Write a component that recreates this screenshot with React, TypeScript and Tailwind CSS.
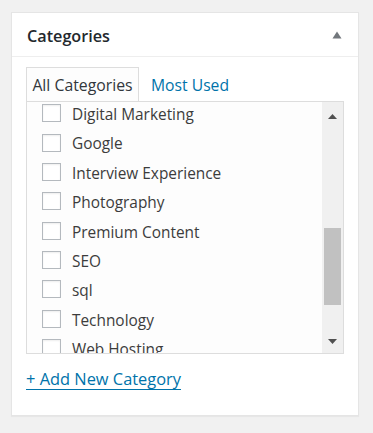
import React from "react";

const items = [
  "Digital Marketing",
  "Google",
  "Interview Experience",
  "Photography",
  "Premium Content",
  "SEO",
  "sql",
  "Technology",
  "Web Hosting",
];

export default function App() {
  return (
    <div
      className="w-[373px] h-[433px] bg-[#f1f1f1] pt-[12px] pl-[11px]"
      style={{ fontFamily: '"Open Sans", "Noto Sans", sans-serif' }}
    >
      <div className="w-[348px] h-[404px] bg-white border border-[#e5e5e5] shadow-[0_1px_1px_rgba(0,0,0,0.04)] flex flex-col">
        <div className="h-[44px] border-b border-[#eeeeee] flex items-center justify-between pl-[15px] pr-[16px]">
          <span className="text-[16.2px] font-semibold text-[#23282d] leading-none pt-[3px]">Categories</span>
          <svg width="10" height="8" viewBox="0 0 10 8">
            <polygon points="5,0.5 9.5,7.5 0.5,7.5" fill="#72777c" />
          </svg>
        </div>
        <div className="pl-[14px] pt-[11px]">
          <div className="flex items-end h-[33px]">
            <div className="h-[34px] w-[113px] border border-b-0 border-[#dddddd] bg-[#fdfdfd] relative z-10 flex items-center justify-center pt-[2px]">
              <span className="text-[15.8px] text-[#32373c] leading-none">All Categories</span>
            </div>
            <div className="h-[33px] flex items-center pl-[12px] pt-[2px]">
              <span className="text-[15.7px] text-[#0073aa] leading-none">Most Used</span>
            </div>
          </div>
          <div className="w-[318px] h-[253px] border border-[#dddddd] bg-[#fdfdfd] flex">
            <div className="flex-1 overflow-hidden">
              <div className="-mt-[3.4px]">
                {items.map((t) => (
                  <div key={t} className="h-[29.37px] flex items-center pl-[15px]">
                    <div className="w-[19px] h-[18px] border border-[#b4b9be] bg-white shadow-[inset_0_1px_2px_rgba(0,0,0,0.07)] shrink-0" />
                    <span className="ml-[11px] pt-[3px] text-[15.4px] leading-none text-[#3c3c3c] whitespace-nowrap">{t}</span>
                  </div>
                ))}
              </div>
            </div>
            <div className="w-[21px] bg-[#f0f0f0] flex flex-col items-center">
              <div className="h-[17px] flex items-end justify-center w-full">
                <svg width="9" height="5" viewBox="0 0 9 5">
                  <polygon points="4.5,0 9,5 0,5" fill="#505050" />
                </svg>
              </div>
              <div className="h-[109px]" />
              <div className="w-[17px] h-[77px] bg-[#c1c1c1]" />
              <div className="flex-1 flex items-end justify-center pb-[9px] w-full">
                <svg width="9" height="5" viewBox="0 0 9 5">
                  <polygon points="0,0 9,0 4.5,5" fill="#505050" />
                </svg>
              </div>
            </div>
          </div>
          <div className="pt-[13px]">
            <span className="text-[16.4px] leading-none text-[#0073aa] underline underline-offset-[4px] decoration-1">
              + Add New Category
            </span>
          </div>
        </div>
      </div>
    </div>
  );
}
